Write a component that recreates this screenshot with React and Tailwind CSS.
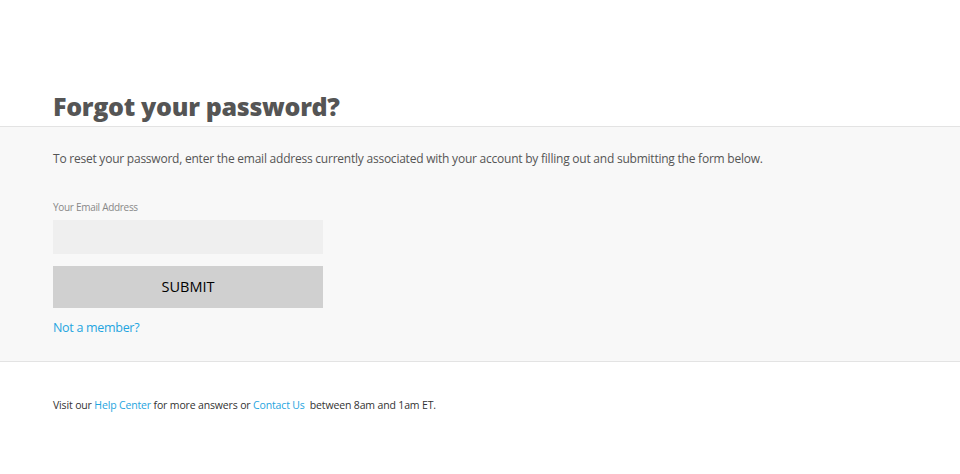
export default function App() {
  return (
    <div className="w-[960px] h-[474px] bg-white" style={{ fontFamily: '"Open Sans", sans-serif' }}>
      <div className="pt-[87px] px-[53px] h-[126px]">
        <h1 className="text-[25px] leading-[38px] font-extrabold text-[#555555] tracking-[-0.3px]">Forgot your password?</h1>
      </div>
      <div className="bg-[#f8f8f8] border-y border-[#e3e3e3] h-[236px] px-[53px] pt-[23px]">
        <p className="text-[12px] leading-[18px] text-[#555555] tracking-[-0.23px]">
          To reset your password, enter the email address currently associated with your account by filling out and submitting the form below.
        </p>
        <div className="mt-[32px] text-[10px] leading-[14px] text-[#888888] tracking-[-0.3px]">Your Email Address</div>
        <div className="mt-[6px] w-[270px] h-[34px] bg-[#efefef]"></div>
        <button className="mt-[12px] w-[270px] h-[42px] bg-[#d0d0d0] text-[14.5px] text-black flex items-center justify-center">SUBMIT</button>
        <div className="mt-[11px] text-[12.5px] leading-[18px] text-[#1fa5e0] tracking-[-0.3px]">Not a member?</div>
      </div>
      <div className="px-[53px] pt-[35px] text-[10.5px] leading-[16px] text-[#333333] tracking-[-0.15px]">
        Visit our <span className="text-[#1fa5e0]">Help Center</span> for more answers or <span className="text-[#1fa5e0]">Contact Us</span>{"\u00a0"} between 8am and 1am ET.
      </div>
    </div>
  );
}
